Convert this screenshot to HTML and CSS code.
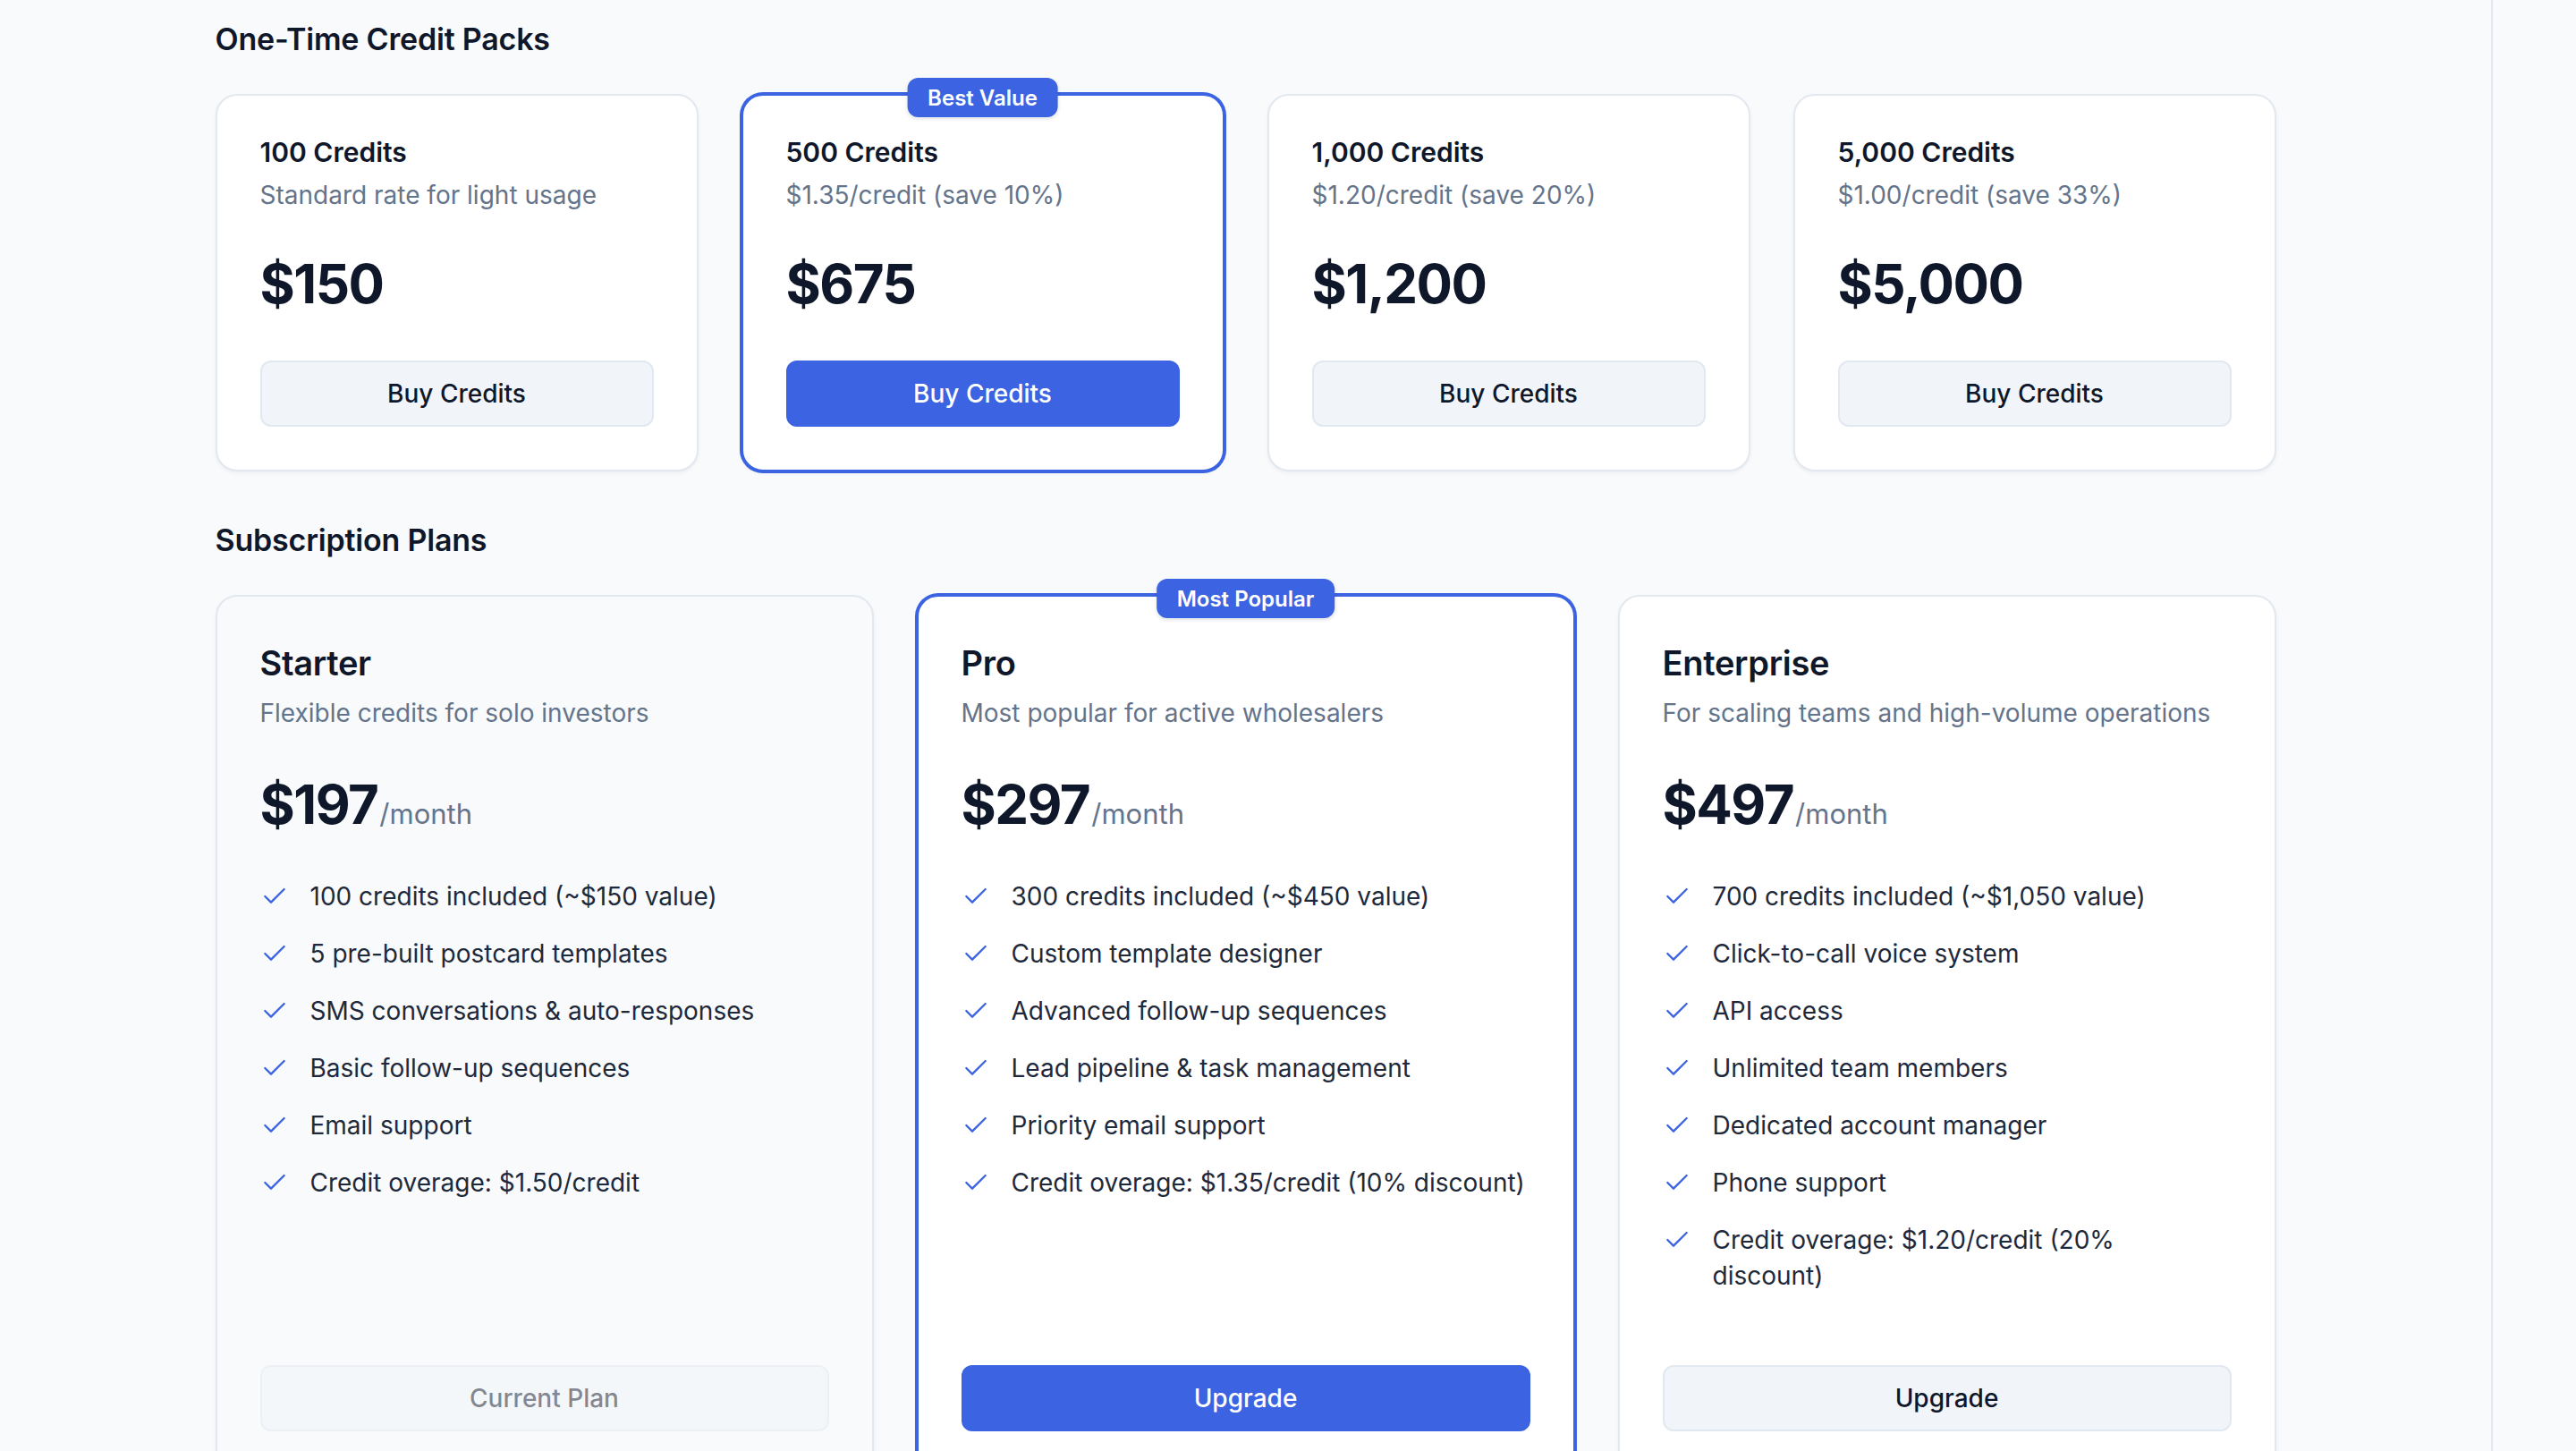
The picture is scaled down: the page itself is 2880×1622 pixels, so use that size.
FILE: index.html
```html
<!DOCTYPE html>
<html lang="en">
<head>
<meta charset="utf-8">
<title>Credits &amp; Plans</title>
<link rel="stylesheet" href="styles.css">
</head>
<body>
<div class="layout">
  <main class="main">
    <div class="container">
      <section class="section">
        <h2 class="section-title">One-Time Credit Packs</h2>
        <div class="packs">
          <div class="card pack">
            <h3 class="pack-name">100 Credits</h3>
            <p class="muted pack-rate">Standard rate for light usage</p>
            <div class="pack-price">$150</div>
            <button class="btn btn-secondary pack-btn">Buy Credits</button>
          </div>
          <div class="card pack card-featured">
            <span class="badge">Best Value</span>
            <h3 class="pack-name">500 Credits</h3>
            <p class="muted pack-rate">$1.35/credit (save 10%)</p>
            <div class="pack-price">$675</div>
            <button class="btn btn-primary pack-btn">Buy Credits</button>
          </div>
          <div class="card pack">
            <h3 class="pack-name">1,000 Credits</h3>
            <p class="muted pack-rate">$1.20/credit (save 20%)</p>
            <div class="pack-price">$1,200</div>
            <button class="btn btn-secondary pack-btn">Buy Credits</button>
          </div>
          <div class="card pack">
            <h3 class="pack-name">5,000 Credits</h3>
            <p class="muted pack-rate">$1.00/credit (save 33%)</p>
            <div class="pack-price">$5,000</div>
            <button class="btn btn-secondary pack-btn">Buy Credits</button>
          </div>
        </div>
      </section>

      <section class="section section-plans">
        <h2 class="section-title">Subscription Plans</h2>
        <div class="plans">
          <div class="card plan plan-current">
            <h3 class="plan-name">Starter</h3>
            <p class="muted plan-desc">Flexible credits for solo investors</p>
            <div class="plan-price"><span class="amount">$197</span><span class="period">/month</span></div>
            <ul class="features">
              <li><svg class="check" viewBox="0 0 24 24"><polyline points="20 6 9 17 4 12"/></svg><span>100 credits included (~$150 value)</span></li>
              <li><svg class="check" viewBox="0 0 24 24"><polyline points="20 6 9 17 4 12"/></svg><span>5 pre-built postcard templates</span></li>
              <li><svg class="check" viewBox="0 0 24 24"><polyline points="20 6 9 17 4 12"/></svg><span>SMS conversations &amp; auto-responses</span></li>
              <li><svg class="check" viewBox="0 0 24 24"><polyline points="20 6 9 17 4 12"/></svg><span>Basic follow-up sequences</span></li>
              <li><svg class="check" viewBox="0 0 24 24"><polyline points="20 6 9 17 4 12"/></svg><span>Email support</span></li>
              <li><svg class="check" viewBox="0 0 24 24"><polyline points="20 6 9 17 4 12"/></svg><span>Credit overage: $1.50/credit</span></li>
            </ul>
            <button class="btn btn-secondary plan-btn" disabled>Current Plan</button>
          </div>
          <div class="card plan card-featured">
            <span class="badge">Most Popular</span>
            <h3 class="plan-name">Pro</h3>
            <p class="muted plan-desc">Most popular for active wholesalers</p>
            <div class="plan-price"><span class="amount">$297</span><span class="period">/month</span></div>
            <ul class="features">
              <li><svg class="check" viewBox="0 0 24 24"><polyline points="20 6 9 17 4 12"/></svg><span>300 credits included (~$450 value)</span></li>
              <li><svg class="check" viewBox="0 0 24 24"><polyline points="20 6 9 17 4 12"/></svg><span>Custom template designer</span></li>
              <li><svg class="check" viewBox="0 0 24 24"><polyline points="20 6 9 17 4 12"/></svg><span>Advanced follow-up sequences</span></li>
              <li><svg class="check" viewBox="0 0 24 24"><polyline points="20 6 9 17 4 12"/></svg><span>Lead pipeline &amp; task management</span></li>
              <li><svg class="check" viewBox="0 0 24 24"><polyline points="20 6 9 17 4 12"/></svg><span>Priority email support</span></li>
              <li><svg class="check" viewBox="0 0 24 24"><polyline points="20 6 9 17 4 12"/></svg><span>Credit overage: $1.35/credit (10% discount)</span></li>
            </ul>
            <button class="btn btn-primary plan-btn">Upgrade</button>
          </div>
          <div class="card plan">
            <h3 class="plan-name">Enterprise</h3>
            <p class="muted plan-desc">For scaling teams and high-volume operations</p>
            <div class="plan-price"><span class="amount">$497</span><span class="period">/month</span></div>
            <ul class="features">
              <li><svg class="check" viewBox="0 0 24 24"><polyline points="20 6 9 17 4 12"/></svg><span>700 credits included (~$1,050 value)</span></li>
              <li><svg class="check" viewBox="0 0 24 24"><polyline points="20 6 9 17 4 12"/></svg><span>Click-to-call voice system</span></li>
              <li><svg class="check" viewBox="0 0 24 24"><polyline points="20 6 9 17 4 12"/></svg><span>API access</span></li>
              <li><svg class="check" viewBox="0 0 24 24"><polyline points="20 6 9 17 4 12"/></svg><span>Unlimited team members</span></li>
              <li><svg class="check" viewBox="0 0 24 24"><polyline points="20 6 9 17 4 12"/></svg><span>Dedicated account manager</span></li>
              <li><svg class="check" viewBox="0 0 24 24"><polyline points="20 6 9 17 4 12"/></svg><span>Phone support</span></li>
              <li><svg class="check" viewBox="0 0 24 24"><polyline points="20 6 9 17 4 12"/></svg><span>Credit overage: $1.20/credit (20% discount)</span></li>
            </ul>
            <button class="btn btn-secondary plan-btn">Upgrade</button>
          </div>
        </div>
      </section>
    </div>
  </main>
  <aside class="rail"></aside>
</div>
</body>
</html>
```

FILE: styles.css
```css
* { box-sizing: border-box; }

html, body {
  margin: 0;
  padding: 0;
  background: #f8fafc;
  font-family: Inter, "Noto Sans", "Liberation Sans", sans-serif;
  color: #0f172a;
}

.layout {
  display: flex;
  min-height: 100vh;
}

.main {
  flex: 1;
  padding: 20px 0 60px;
}

.rail {
  width: 95px;
  flex: none;
  border-left: 2px solid #e2e8f0;
}

.container {
  max-width: 2304px;
  margin: 0 auto;
}

.section-title {
  margin: 0 0 37px;
  font-size: 34px;
  line-height: 48px;
  font-weight: 600;
  color: #0f172a;
  letter-spacing: -0.2px;
}

.section-plans { margin-top: 53px; }

.card {
  position: relative;
  background: #ffffff;
  border: 2px solid #e2e8f0;
  border-radius: 24px;
  padding: 48px;
  box-shadow: 0 2px 4px rgba(15, 23, 42, 0.05);
  display: flex;
  flex-direction: column;
}

.card-featured {
  border-color: #3b63e2;
  box-shadow: 0 0 0 2px #3b63e2, 0 2px 4px rgba(15, 23, 42, 0.05);
}

.badge {
  position: absolute;
  top: -20px;
  left: 50%;
  transform: translateX(-50%);
  height: 44px;
  padding: 0 23px;
  display: flex;
  align-items: center;
  background: #3b63e2;
  color: #ffffff;
  font-size: 24px;
  font-weight: 600;
  border-radius: 12px;
  white-space: nowrap;
  box-shadow: 0 2px 4px rgba(15, 23, 42, 0.12);
}

.muted { color: #64748b; }

/* Credit packs */
.packs {
  display: grid;
  grid-template-columns: repeat(4, 1fr);
  gap: 48px;
}

.pack-name {
  margin: 0;
  font-size: 30px;
  line-height: 30px;
  font-weight: 600;
  color: #0f172a;
}

.pack-rate {
  margin: 13px 0 0;
  font-size: 28px;
  line-height: 40px;
}

.pack-price {
  margin-top: 49px;
  font-size: 60px;
  line-height: 60px;
  font-weight: 700;
  letter-spacing: -1.5px;
  color: #0f172a;
}

.pack-btn { margin-top: 56px; }

/* Buttons */
.btn {
  display: flex;
  align-items: center;
  justify-content: center;
  width: 100%;
  height: 74px;
  border-radius: 12px;
  font-family: inherit;
  font-size: 28px;
  font-weight: 500;
  cursor: pointer;
}

.btn-secondary {
  background: #f1f5f9;
  border: 2px solid #e2e8f0;
  color: #0f172a;
}

.btn-primary {
  background: #3b63e2;
  border: 2px solid #3b63e2;
  color: #ffffff;
}

.btn:disabled {
  opacity: 0.5;
  cursor: default;
}

/* Plans */
.plans {
  display: grid;
  grid-template-columns: repeat(3, 1fr);
  gap: 48px;
  align-items: stretch;
}

.plan-current { background: #f8fafc; }

.plan-name {
  margin: 0;
  font-size: 38px;
  line-height: 52px;
  font-weight: 600;
  letter-spacing: -0.3px;
  color: #0f172a;
}

.plan-desc {
  margin: 10px 0 0;
  font-size: 28px;
  line-height: 40px;
}

.plan-price {
  margin-top: 52px;
  display: flex;
  align-items: baseline;
}

.amount {
  font-size: 60px;
  line-height: 60px;
  font-weight: 700;
  letter-spacing: -1.5px;
  color: #0f172a;
}

.period {
  margin-left: 2px;
  font-size: 31px;
  line-height: 31px;
  color: #64748b;
}

.features {
  list-style: none;
  margin: 53px 0 80px;
  padding: 0;
  display: flex;
  flex-direction: column;
  gap: 24px;
}

.features li {
  display: flex;
  align-items: flex-start;
  gap: 24px;
  font-size: 28px;
  line-height: 40px;
  color: #1e293b;
}

.check {
  flex: none;
  width: 32px;
  height: 32px;
  margin-top: 4px;
  fill: none;
  stroke: #3b63e2;
  stroke-width: 1.75;
  stroke-linecap: round;
  stroke-linejoin: round;
}

.plan-btn { margin-top: auto; }
```
